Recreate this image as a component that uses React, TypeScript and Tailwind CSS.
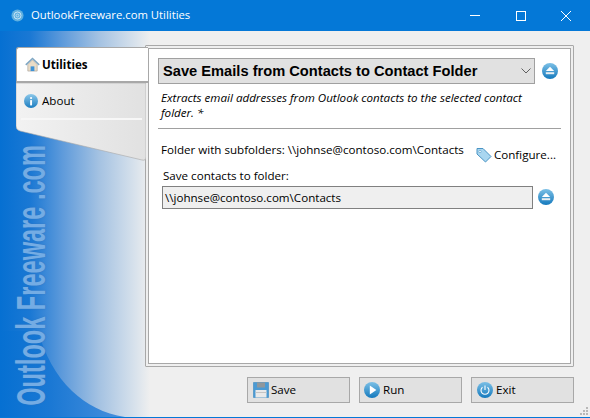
const uiFont = { fontFamily: '"Open Sans", "Noto Sans", sans-serif' };

function EjectIcon({ className }: { className: string }) {
  return (
    <svg viewBox="0 0 16 16" className={className}>
      <defs>
        <linearGradient id="ej" x1="0" y1="0" x2="0" y2="1">
          <stop offset="0" stopColor="#7cc0e6" />
          <stop offset="1" stopColor="#1479bd" />
        </linearGradient>
      </defs>
      <circle cx="8" cy="8" r="8" fill="url(#ej)" />
      <path d="M8 3.800 12.200 8H3.800Z" fill="#fff" />
      <rect x="3.800" y="9.200" width="8.400" height="2" fill="#e8eef2" />
    </svg>
  );
}

function HomeIcon() {
  return (
    <svg viewBox="0 0 16 16" className="w-[15px] h-[15px] shrink-0">
      <path d="M3 8v7h10V8L8 3Z" fill="#eadcc6" stroke="#a8a49c" strokeWidth="0.7" />
      <rect x="6" y="10" width="4" height="5" fill="#3f93d6" />
      <path d="M0.800 8.400 8 1.500l7.200 6.900" fill="none" stroke="#7fa7c4" strokeWidth="1.500" />
    </svg>
  );
}

function InfoIcon() {
  return (
    <svg viewBox="0 0 16 16" className="w-[14px] h-[14px] shrink-0">
      <defs>
        <linearGradient id="inf" x1="0" y1="0" x2="0" y2="1">
          <stop offset="0" stopColor="#8cc8ea" />
          <stop offset="1" stopColor="#1a7cc0" />
        </linearGradient>
      </defs>
      <circle cx="8" cy="8" r="8" fill="url(#inf)" />
      <rect x="7" y="7" width="2.200" height="6" fill="#fff" />
      <rect x="7" y="3.600" width="2.200" height="2" fill="#fff" />
    </svg>
  );
}

function TagIcon() {
  return (
    <svg viewBox="0 0 16 16" className="w-[16px] h-[16px] shrink-0">
      <path d="M1 1.500h6l8 8-5.500 5.500-8.500-8Z" fill="#a9d6f0" stroke="#4a94c4" strokeWidth="1" />
      <circle cx="4" cy="4.500" r="1.200" fill="#fff" stroke="#4a94c4" strokeWidth="0.6" />
    </svg>
  );
}

function SaveIcon() {
  return (
    <svg viewBox="0 0 16 16" className="w-[16px] h-[16px] shrink-0">
      <path d="M0.500 0.500h15v15H0.500Z" fill="#4a9ad4" stroke="#3b86bd" strokeWidth="0.6" />
      <rect x="4" y="0.500" width="8" height="5" fill="#8f979c" />
      <rect x="2.500" y="8" width="11" height="7.500" fill="#e9e9e9" />
      <rect x="2.500" y="10" width="11" height="1" fill="#c4c4c4" />
    </svg>
  );
}

function RunIcon() {
  return (
    <svg viewBox="0 0 16 16" className="w-[16px] h-[16px] shrink-0">
      <defs>
        <linearGradient id="rn" x1="0" y1="0" x2="0" y2="1">
          <stop offset="0" stopColor="#7cc0e6" />
          <stop offset="1" stopColor="#1479bd" />
        </linearGradient>
      </defs>
      <circle cx="8" cy="8" r="8" fill="url(#rn)" />
      <path d="M5.800 3.600 12.400 8l-6.600 4.400Z" fill="#fff" />
    </svg>
  );
}

function ExitIcon() {
  return (
    <svg viewBox="0 0 16 16" className="w-[16px] h-[16px] shrink-0">
      <defs>
        <linearGradient id="ex" x1="0" y1="0" x2="0" y2="1">
          <stop offset="0" stopColor="#7cc0e6" />
          <stop offset="1" stopColor="#1479bd" />
        </linearGradient>
      </defs>
      <circle cx="8" cy="8" r="8" fill="url(#ex)" />
      <path d="M5.500 5.200a4 4 0 1 0 5 0" fill="none" stroke="#fff" strokeWidth="1.100" />
      <path d="M8 3.600v4.400" stroke="#fff" strokeWidth="1.100" />
    </svg>
  );
}

function Backdrop() {
  return (
    <svg viewBox="0 0 590 387" className="absolute inset-0 w-[590px] h-[387px]">
      <defs>
        <linearGradient id="side" gradientUnits="userSpaceOnUse" x1="0" y1="0" x2="150" y2="0">
          <stop offset="0" stopColor="#0670d2" />
          <stop offset="0.2" stopColor="#1a78d4" />
          <stop offset="0.42" stopColor="#5f9bdb" />
          <stop offset="0.66" stopColor="#a4c2e2" />
          <stop offset="0.9" stopColor="#d8e2ec" />
          <stop offset="1" stopColor="#efefef" />
        </linearGradient>
        <linearGradient id="curve" gradientUnits="userSpaceOnUse" x1="0" y1="0" x2="125" y2="0">
          <stop offset="0" stopColor="#0670d2" />
          <stop offset="0.4" stopColor="#1a78d4" />
          <stop offset="1" stopColor="#4a90dc" />
        </linearGradient>
      </defs>
      <rect x="0" y="0" width="150" height="387" fill="url(#side)" />
      <path d="M0 300H38C44 322 56 345 72 360C86 373 104 383 125 386H0Z" fill="url(#curve)" />
    </svg>
  );
}

function SideMenu() {
  return (
    <div className="relative z-10 w-[145px] shrink-0 pt-[16px] pl-[16px]">
      <svg viewBox="0 0 130 78" className="absolute left-[16px] top-[52px] w-[130px] h-[78px]">
        <defs>
          <linearGradient id="tabs" x1="0" y1="0" x2="1" y2="0">
            <stop offset="0" stopColor="#f2f2f2" />
            <stop offset="1" stopColor="#e1e1e1" />
          </linearGradient>
        </defs>
        <path d="M0 0H130V74Q130 78 126 77L4 48Q0 47 0 43Z" fill="url(#tabs)" stroke="#a8a8a8" strokeWidth="0.6" />
      </svg>
      <div className="relative w-[132px] h-[36px] flex items-center gap-[2px] pl-[8px] bg-white border-t border-l border-b-2 border-[#a8a8a8] rounded-tl-[3px] text-[11.600px] font-bold text-black">
        <HomeIcon />
        <span>Utilities</span>
      </div>
      <div className="relative mx-[5px] h-[37px] flex items-center gap-[4px] pl-[3px] border-b-2 border-[#f7f7f7] text-[11.600px] text-black w-[121px]">
        <InfoIcon />
        <span>About</span>
      </div>
    </div>
  );
}

export default function App() {
  return (
    <div
      style={uiFont}
      className="relative w-[590px] h-[418px] overflow-hidden flex flex-col bg-[#efefef] border-b border-[#0478d7]"
    >
      <header className="h-[31px] shrink-0 flex items-center bg-[#0478d7] text-white text-[11.300px]">
        <svg viewBox="0 0 14 14" className="w-[13px] h-[13px] ml-[11px] mr-[7px] shrink-0">
          <circle cx="7" cy="7" r="6.500" fill="#5fb0e0" />
          <circle cx="7" cy="7" r="3.800" fill="none" stroke="#cfe8f6" strokeWidth="1" />
          <circle cx="7" cy="7" r="1.500" fill="none" stroke="#cfe8f6" strokeWidth="0.8" />
        </svg>
        <span>OutlookFreeware.com Utilities</span>
        <div className="ml-auto mr-[1px] flex h-full">
          <div className="w-[46px] flex items-center justify-center">
            <div className="w-[10px] h-px bg-white" />
          </div>
          <div className="w-[45px] flex items-center justify-center">
            <div className="w-[10px] h-[10px] border border-white" />
          </div>
          <div className="w-[46px] flex items-center justify-center">
            <svg viewBox="0 0 10 10" className="w-[10px] h-[10px]">
              <path d="M0 0 10 10M10 0 0 10" stroke="#fff" strokeWidth="1" />
            </svg>
          </div>
        </div>
      </header>

      <div className="relative flex-1 flex">
        <Backdrop />

        <div
          className="absolute left-[15px] top-[113px] h-[263px] flex items-center justify-center text-[#74ace4] font-bold text-[41px] leading-[33px] whitespace-nowrap [text-shadow:0_0_2px_#2f73bd]"
          style={{ fontFamily: '"Liberation Sans", sans-serif', writingMode: "vertical-rl", transform: "rotate(180deg) scaleY(0.575)" }}
        >
          Outlook Freeware .com
        </div>

        <SideMenu />

        <div className="relative flex-1 pt-[14px] pr-[16px] flex flex-col">
          <div className="h-[322px] border border-[#a8a8a8] rounded-[1px] bg-[#efefef] p-[2px]">
            <div className="h-full bg-white border border-[#a8a8a8] pl-[9px] pr-[9px] pt-[9px] text-[11.600px] text-black">
              <div className="flex items-center gap-[7px]">
                <div className="w-[377px] h-[26px] shrink-0 flex items-center justify-between pl-[4px] pr-[3px] bg-[#e1e1e1] border border-[#a0a0a0]">
                  <span className="font-bold text-[14.670px]" style={{ fontFamily: '"Liberation Sans", sans-serif' }}>
                    Save Emails from Contacts to Contact Folder
                  </span>
                  <svg viewBox="0 0 10 6" className="w-[10px] h-[6px]">
                    <path d="M0.500 0.500 5 5l4.500-4.500" fill="none" stroke="#606060" strokeWidth="1" />
                  </svg>
                </div>
                <EjectIcon className="w-[16px] h-[16px] shrink-0" />
              </div>

              <p className="mt-[6px] ml-[3px] w-[380px] italic leading-[15px]">
                Extracts email addresses from Outlook contacts to the selected contact folder. *
              </p>

              <div className="mt-[8px] h-px bg-[#a0a0a0]" />

              <div className="mt-[10px] pl-[3px] flex items-start">
                <span className="mt-[2px]">Folder with subfolders: \\johnse@contoso.com\Contacts</span>
                <div className="ml-auto mr-[5px] mt-[7px] flex items-center gap-[2px]">
                  <TagIcon />
                  <span>Configure...</span>
                </div>
              </div>

              <div className="mt-[4px] pl-[5px]">Save contacts to folder:</div>

              <div className="mt-[1px] flex items-center gap-[5px] pl-[4px]">
                <div className="w-[371px] h-[23px] shrink-0 flex items-center pl-[2px] bg-[#efefef] border border-[#808080]">
                  \\johnse@contoso.com\Contacts
                </div>
                <EjectIcon className="w-[16px] h-[16px] shrink-0" />
              </div>
            </div>
          </div>

          <div className="mt-[10px] flex justify-end gap-[9px] text-[11.600px] text-black">
            <div className="w-[103px] h-[26px] flex items-center gap-[2px] pl-[5px] bg-[#e1e1e1] border border-[#a8a8a8]">
              <SaveIcon />
              <span>Save</span>
            </div>
            <div className="w-[103px] h-[26px] flex items-center gap-[3px] pl-[4px] bg-[#e1e1e1] border border-[#a8a8a8]">
              <RunIcon />
              <span>Run</span>
            </div>
            <div className="w-[103px] h-[26px] flex items-center gap-[3px] pl-[5px] bg-[#e1e1e1] border border-[#a8a8a8]">
              <ExitIcon />
              <span>Exit</span>
            </div>
          </div>
        </div>

        <div className="absolute right-[2px] bottom-[2px] grid grid-cols-3 gap-px">
          <div className="w-[2px] h-[2px]" />
          <div className="w-[2px] h-[2px]" />
          <div className="w-[2px] h-[2px] bg-[#b8b8b8]" />
          <div className="w-[2px] h-[2px]" />
          <div className="w-[2px] h-[2px] bg-[#b8b8b8]" />
          <div className="w-[2px] h-[2px] bg-[#b8b8b8]" />
          <div className="w-[2px] h-[2px] bg-[#b8b8b8]" />
          <div className="w-[2px] h-[2px] bg-[#b8b8b8]" />
          <div className="w-[2px] h-[2px] bg-[#b8b8b8]" />
        </div>
      </div>
    </div>
  );
}
